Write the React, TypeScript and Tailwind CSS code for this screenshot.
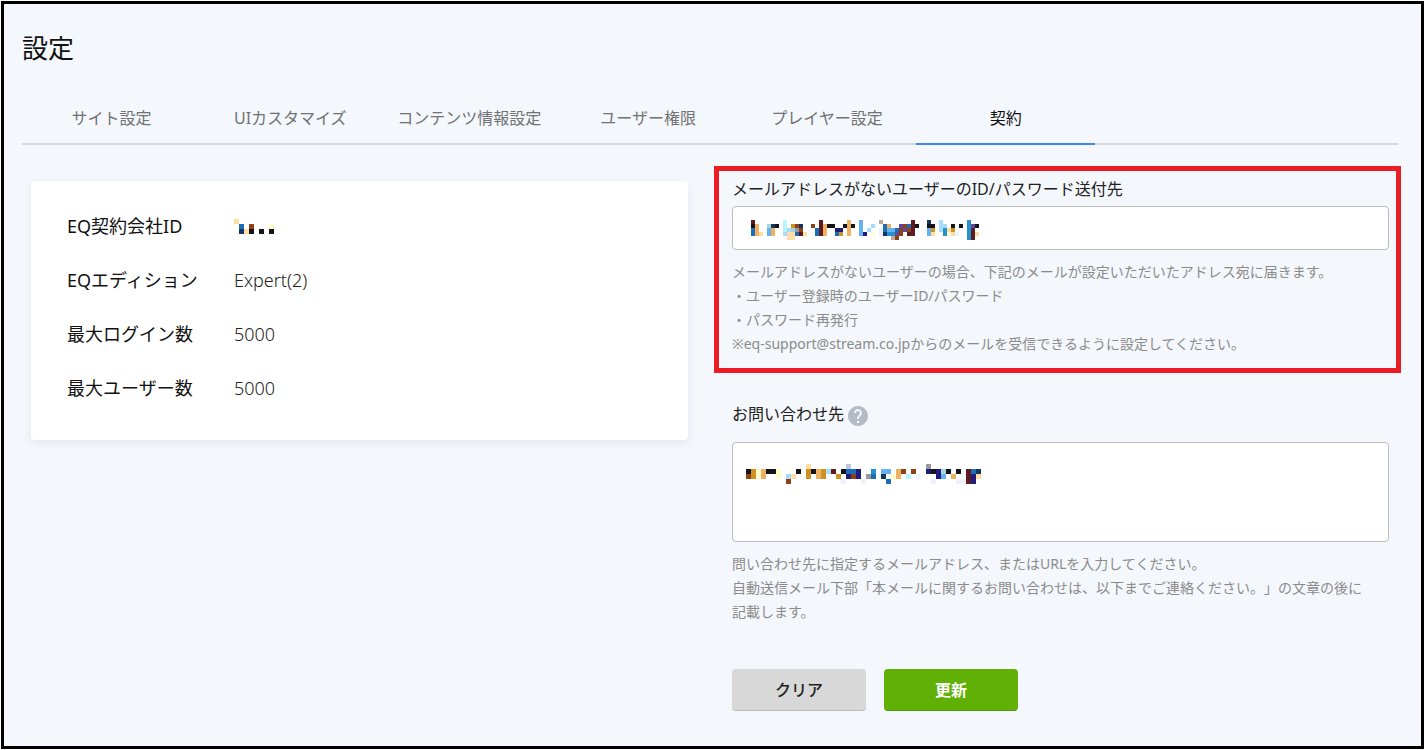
import React from 'react';

const tabs = ['サイト設定', 'UIカスタマイズ', 'コンテンツ情報設定', 'ユーザー権限', 'プレイヤー設定', '契約'];

// One letter per color, used by the masked value grids below
const maskColors: Record<string, string> = {
  k: '#151519',
  m: '#5f1b20',
  n: '#1f1c7c',
  d: '#17365f',
  b: '#1c6cb8',
  s: '#2492cf',
  l: '#66b2ee',
  c: '#b5f6ff',
  p: '#a6dcff',
  t: '#a5d6dc',
  o: '#edb161',
  g: '#cf921f',
  r: '#8c4216',
  y: '#ffdda3',
  w: '#fffccb',
  v: '#62459c',
  a: '#bea798',
  x: '#9a9a9c',
  z: '#c8c4e0',
  f: '#eff2fc',
};

const companyIdMask = [
  'y.......',
  '.b.r...w',
  '.dyk.k.k',
];

const addressMask = [
  'm.......c........m......o..l....a.......m...d..p......s..',
  'ko..tdk.c.grd..r.mokk..kok.l..p..bo..vrbmk..kk.pp.k.k.svk',
  'bo..lo..cptxr...bmo..nn.o..l.p..fbllbrvrm...lg.psyg...sm.',
  'boy.lo..pyybmy..bmo..bg.o..ln.w.fdssvr.mm...ly..swyf..smy',
  '.........yy........................ar.................sm.',
];

const contactMask = [
  '............y.......z...............x..........',
  'kgwokkw...k.gkogpm.kbbn..s.ll.or.r..nkntk.k.mbd',
  'rgwo..w.py..g.og..g.nrn.xb.d.wo.c.f...nl.o..mny',
  '........r..........f...f....b........f....ffmn.',
];

function MaskedValue({ rows, size }: { rows: string[]; size: number }) {
  return (
    <svg
      width={rows[0].length * size}
      height={rows.length * size}
      shapeRendering="crispEdges"
      aria-hidden="true"
    >
      {rows.map((row, y) =>
        row.split('').map((cell, x) =>
          cell === '.' ? null : (
            <rect key={`${x}-${y}`} x={x * size} y={y * size} width={size} height={size} fill={maskColors[cell]} />
          )
        )
      )}
    </svg>
  );
}

function HelpIcon() {
  return (
    <svg className="w-6 h-6" viewBox="0 0 24 24" fill="#b4bbc7">
      <path d="M12 2C6.48 2 2 6.48 2 12s4.48 10 10 10 10-4.48 10-10S17.52 2 12 2zm1 17h-2v-2h2v2zm2.07-7.75-.9.92C13.45 12.9 13 13.5 13 15h-2v-.5c0-1.1.45-2.1 1.17-2.83l1.24-1.26c.37-.36.59-.86.59-1.41 0-1.1-.9-2-2-2s-2 .9-2 2H8c0-2.21 1.79-4 4-4s4 1.79 4 4c0 .88-.36 1.68-.93 2.25z" />
    </svg>
  );
}

function ContractCard() {
  const rows = [
    { label: 'EQ契約会社ID', value: <MaskedValue rows={companyIdMask} size={5} /> },
    { label: 'EQエディション', value: 'Expert(2)' },
    { label: '最大ログイン数', value: '5000' },
    { label: '最大ユーザー数', value: '5000' },
  ];

  return (
    <dl className="mt-1 bg-white rounded-[4px] shadow-[0_3px_10px_rgba(40,60,90,0.08)] px-9 pt-[18px] pb-[25px] text-[18px]">
      {rows.map((row) => (
        <div key={row.label} className="flex items-center h-[54px]">
          <dt className="w-[167px] shrink-0 text-[#111]">{row.label}</dt>
          <dd className="font-light text-[#222]">{row.value}</dd>
        </div>
      ))}
    </dl>
  );
}

export default function App() {
  return (
    <div className="min-h-screen flex bg-white p-px font-['Noto_Sans','Noto_Sans_CJK_JP',sans-serif] text-[#222] [text-spacing-trim:space-all]" lang="ja">
      <main className="flex-1 min-w-0 border-3 border-black bg-[#f4f7fc] pl-[18px] pr-[23px] pt-6 pb-8">
        <h1 className="text-[26px] leading-10 text-[#111]">設定</h1>

        {/* Tabs */}
        <nav className="flex mt-6 text-[16px]">
          {tabs.map((tab) => (
            <a
              key={tab}
              href="#"
              className={`w-[13%] h-[53px] flex items-center justify-center whitespace-nowrap border-b-2 ${
                tab === '契約' ? 'border-[#4285f4] text-[#111]' : 'border-[#d5d7da] text-[#707274]'
              }`}
            >
              {tab}
            </a>
          ))}
          <div className="flex-1 border-b-2 border-[#d5d7da]" />
        </nav>

        <div className="grid grid-cols-2 items-start gap-11 px-[9px] pt-8">
          <ContractCard />

          <form onSubmit={(e) => e.preventDefault()}>
            <section className="relative">
              {/* Highlight frame */}
              <div className="absolute -top-[11px] -bottom-[17px] -left-[18px] -right-3 border-[5px] border-[#ec1c24] pointer-events-none" />
              <label htmlFor="address" className="block text-[16px] leading-6 text-[#222]">
                メールアドレスがないユーザーのID/パスワード送付先
              </label>
              <div className="relative mt-[5px]">
                <input
                  id="address"
                  type="text"
                  className="block w-full h-11 px-[18px] bg-white border border-[#bdbdbd] rounded-[4px]"
                />
                <div className="absolute left-[19px] top-[14px] pointer-events-none">
                  <MaskedValue rows={addressMask} size={4} />
                </div>
              </div>
              <p className="mt-[10px] text-[14px] leading-6 text-[#8b8b8b]">
                メールアドレスがないユーザーの場合、下記のメールが設定いただいたアドレス宛に届きます。
                <br />
                ・ユーザー登録時のユーザーID/パスワード
                <br />
                ・パスワード再発行
                <br />
                ※eq-support@stream.co.jpからのメールを受信できるように設定してください。
              </p>
            </section>

            <section className="mt-[46px]">
              <div className="flex items-center gap-[2px] h-6">
                <label htmlFor="contact" className="text-[16px] leading-6 text-[#222]">
                  お問い合わせ先
                </label>
                <span className="pt-1">
                  <HelpIcon />
                </span>
              </div>
              <div className="relative mt-4">
                <textarea
                  id="contact"
                  className="block w-full h-[100px] px-3 py-5 bg-white border border-[#bdbdbd] rounded-[4px] resize-none"
                />
                <div className="absolute left-[14px] top-[22px] pointer-events-none">
                  <MaskedValue rows={contactMask} size={5} />
                </div>
              </div>
              <p className="mt-[10px] text-[14px] leading-6 text-[#8b8b8b]">
                問い合わせ先に指定するメールアドレス、またはURLを入力してください。
                <br />
                自動送信メール下部「本メールに関するお問い合わせは、以下までご連絡ください。」の文章の後に
                <br />
                記載します。
              </p>
            </section>

            <div className="flex gap-[18px] mt-[45px] text-[16px]">
              <button
                type="reset"
                className="w-[134px] h-[42px] rounded-[4px] bg-[#d8d8d8] border-b border-[#bcbcbc] font-medium"
              >
                クリア
              </button>
              <button
                type="submit"
                className="w-[134px] h-[42px] rounded-[4px] bg-[#60b006] border-b border-[#519a03] font-bold text-white"
              >
                更新
              </button>
            </div>
          </form>
        </div>
      </main>
    </div>
  );
}
